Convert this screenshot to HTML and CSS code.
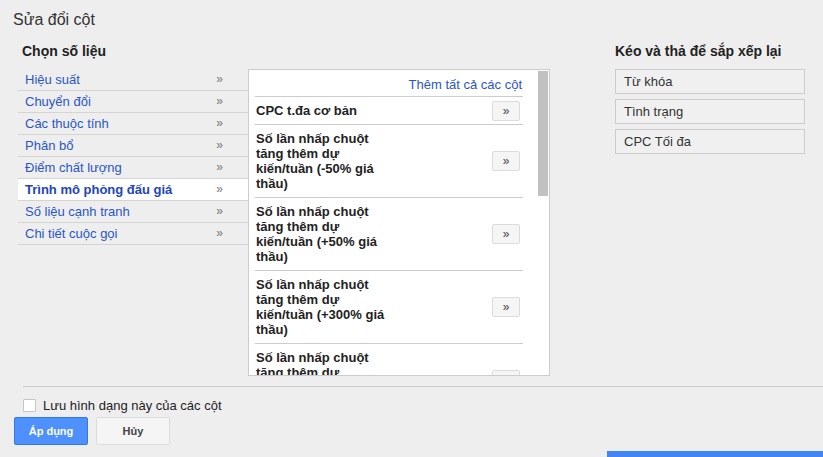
FILE: index.html
```html
<!DOCTYPE html>
<html lang="vi">
<head>
<meta charset="utf-8">
<title>Sửa đổi cột</title>
<link rel="stylesheet" href="styles.css">
</head>
<body>
<div class="dialog">
  <h1 class="title">Sửa đổi cột</h1>
  <div class="main">
    <section class="picker">
      <h2 class="head head-left">Chọn số liệu</h2>
      <div class="picker-body">
        <ul class="cats">
          <li class="cat"><span class="cat-name">Hiệu suất</span><span class="cat-arrow">»</span></li>
          <li class="cat"><span class="cat-name">Chuyển đổi</span><span class="cat-arrow">»</span></li>
          <li class="cat"><span class="cat-name">Các thuộc tính</span><span class="cat-arrow">»</span></li>
          <li class="cat"><span class="cat-name">Phân bổ</span><span class="cat-arrow">»</span></li>
          <li class="cat"><span class="cat-name">Điểm chất lượng</span><span class="cat-arrow">»</span></li>
          <li class="cat cat-selected"><span class="cat-name">Trình mô phỏng đấu giá</span><span class="cat-arrow">»</span></li>
          <li class="cat"><span class="cat-name">Số liệu cạnh tranh</span><span class="cat-arrow">»</span></li>
          <li class="cat"><span class="cat-name">Chi tiết cuộc gọi</span><span class="cat-arrow">»</span></li>
        </ul>
        <div class="panel">
          <div class="panel-scroll">
            <div class="panel-head"><a class="add-all">Thêm tất cả các cột</a></div>
            <div class="metric"><span class="metric-name">CPC t.đa cơ bản</span><button class="add-btn">»</button></div>
            <div class="metric"><span class="metric-name">Số lần nhấp chuột tăng thêm dự kiến/tuần (-50% giá thầu)</span><button class="add-btn">»</button></div>
            <div class="metric"><span class="metric-name">Số lần nhấp chuột tăng thêm dự kiến/tuần (+50% giá thầu)</span><button class="add-btn">»</button></div>
            <div class="metric"><span class="metric-name">Số lần nhấp chuột tăng thêm dự kiến/tuần (+300% giá thầu)</span><button class="add-btn">»</button></div>
            <div class="metric"><span class="metric-name">Số lần nhấp chuột tăng thêm dự kiến/tuần (+300% giá thầu)</span><button class="add-btn">»</button></div>
          </div>
          <div class="scrollbar"><div class="thumb"></div></div>
        </div>
      </div>
    </section>
    <section class="order">
      <h2 class="head">Kéo và thả để sắp xếp lại</h2>
      <div class="chips">
        <div class="chip">Từ khóa</div>
        <div class="chip">Tình trạng</div>
        <div class="chip">CPC Tối đa</div>
      </div>
    </section>
  </div>
  <div class="footer-line"></div>
  <label class="save"><span class="checkbox"></span>Lưu hình dạng này của các cột</label>
  <div class="actions">
    <button class="btn btn-primary">Áp dụng</button>
    <button class="btn btn-default">Hủy</button>
  </div>
  <div class="toast-edge"></div>
</div>
</body>
</html>
```
FILE: styles.css
```css
html, body {
  margin: 0;
  padding: 0;
  background: #eeeeee;
}
body {
  font-family: "Liberation Sans", Arial, sans-serif;
  color: #222;
}
.dialog {
  position: relative;
  height: 457px;
  overflow: hidden;
}
.title {
  margin: 0;
  padding: 10px 13px 0;
  font-size: 16px;
  line-height: 20px;
  font-weight: normal;
  color: #333;
}
.main {
  display: flex;
  margin-top: 12px;
  padding-left: 18px;
  gap: 65px;
}
.head {
  margin: 0 0 9px;
  font-size: 14px;
  line-height: 18px;
  font-weight: bold;
  color: #222;
}
.head-left {
  padding-left: 4px;
}
.picker-body {
  display: flex;
  align-items: flex-start;
}
.cats {
  list-style: none;
  margin: 0;
  padding: 0;
  width: 230px;
}
.cat {
  display: flex;
  justify-content: space-between;
  height: 21px;
  line-height: 21px;
  border-bottom: 1px solid #d4d4d4;
  font-size: 13px;
  padding: 0 25px 0 7px;
  color: #2a55c8;
}
.cat-arrow {
  color: #777;
  font-size: 12px;
}
.cat-selected {
  background: #fff;
  font-weight: bold;
  color: #2244bb;
}
.cat-selected .cat-arrow {
  font-weight: normal;
}
.panel {
  display: flex;
  width: 302px;
  height: 307px;
  box-sizing: border-box;
  border: 1px solid #cccccc;
  background: #fff;
  overflow: hidden;
}
.panel-scroll {
  flex: 1;
  padding: 0 15px 0 6px;
  overflow: hidden;
}
.panel-head {
  padding: 6px 1px 4px 0;
  line-height: 15px;
  text-align: right;
  border-bottom: 1px solid #cccccc;
}
.add-all {
  font-size: 13px;
  color: #2a55c8;
}
.metric {
  display: flex;
  align-items: center;
  padding: 6px 0 6px 1px;
  border-bottom: 1px solid #cccccc;
}
.metric-name {
  width: 140px;
  font-size: 13px;
  line-height: 15px;
  font-weight: bold;
  color: #222;
}
.add-btn {
  margin: -3px 3px -3px auto;
  width: 28px;
  height: 20px;
  padding: 0;
  border: 1px solid #dcdcdc;
  border-radius: 2px;
  background: #f5f5f5;
  color: #444;
  font-family: "Liberation Sans", Arial, sans-serif;
  font-size: 12px;
  line-height: 18px;
}
.scrollbar {
  width: 11px;
  flex: none;
}
.thumb {
  width: 10px;
  height: 125px;
  margin-top: 1px;
  background: #c1c1c1;
}
.chips {
  display: flex;
  flex-direction: column;
  gap: 5px;
  width: 190px;
}
.chip {
  height: 25px;
  box-sizing: border-box;
  border: 1px solid #cccccc;
  background: #f0f0f0;
  padding-left: 8px;
  line-height: 23px;
  font-size: 13px;
  color: #333;
}
.footer-line {
  margin: 10px 0 0 23px;
  border-top: 1px solid #cccccc;
}
.save {
  display: flex;
  align-items: center;
  gap: 7px;
  height: 13px;
  margin-top: 12px;
  padding-left: 23px;
  font-size: 13px;
  color: #222;
}
.checkbox {
  width: 13px;
  height: 13px;
  box-sizing: border-box;
  border: 1px solid #c6c6c6;
  border-radius: 1px;
  background: #fff;
}
.actions {
  display: flex;
  gap: 8px;
  margin-top: 5px;
  padding-left: 14px;
}
.btn {
  width: 74px;
  height: 28px;
  padding: 0;
  border-radius: 2px;
  font-family: "Liberation Sans", Arial, sans-serif;
  font-size: 11px;
  font-weight: bold;
}
.btn-primary {
  background: #4d90fe;
  border: 1px solid #3079ed;
  color: #fff;
}
.btn-default {
  background: #f5f5f5;
  border: 1px solid #dcdcdc;
  color: #444;
}
.toast-edge {
  position: absolute;
  left: 607px;
  top: 451px;
  width: 216px;
  height: 6px;
  background: #4285f4;
}
```
